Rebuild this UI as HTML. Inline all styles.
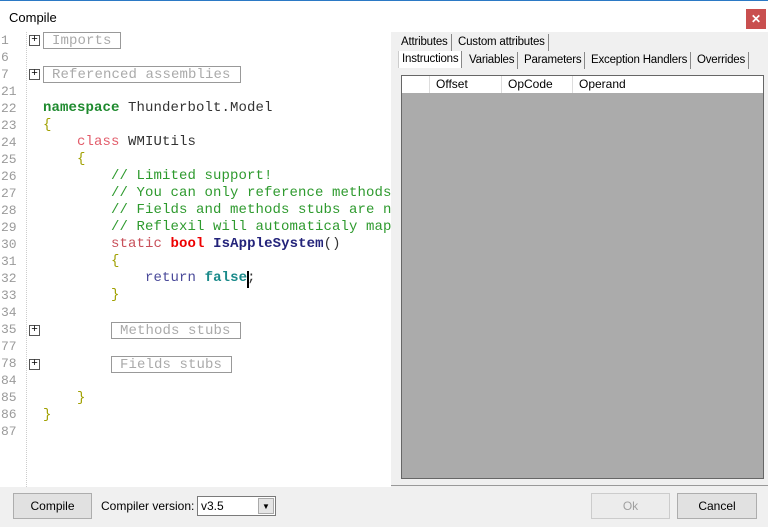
<!DOCTYPE html>
<html><head><meta charset="utf-8"><style>
*{margin:0;padding:0;box-sizing:border-box}
body{width:768px;height:527px;background:#f0f0f0;position:relative;overflow:hidden;font-family:"Liberation Sans",sans-serif;font-size:12px}
.top{position:absolute;left:0;top:0;width:768px;height:32px;background:#fff;border-top:1px solid #2b79c5}
.title{position:absolute;left:9px;top:9px;font-size:13px;color:#000}
.close{position:absolute;left:746px;top:8px;width:20px;height:20px;background:#c94f4f;color:#fff;font-size:12px;text-align:center;line-height:20px;font-weight:bold}
.editor{position:absolute;left:0;top:32px;width:391px;height:455px;background:#fff;overflow:hidden}
.gut{position:absolute;left:26px;top:0;height:455px;border-left:1px dotted #ccc}
.ln{position:absolute;left:1px;font-family:"Liberation Mono",monospace;font-size:13px;color:#9a9a9a;line-height:17px}
.code{position:absolute;white-space:pre;font-family:"Liberation Mono",monospace;font-size:14px;line-height:17px;color:#333;letter-spacing:0.1px}
.plus{position:absolute;left:29px;width:11px;height:11px;border:1px solid #555;font-size:11px;line-height:8px;text-align:center;font-family:"Liberation Mono",monospace;color:#000}
.fold{position:absolute;height:17px;border:1px solid #999;font-family:"Liberation Mono",monospace;font-size:14px;color:#aaa;line-height:17px;padding-left:8px;white-space:pre;letter-spacing:0.1px}
.g{color:#2e9a2e}.kw{color:#1e8a2e;font-weight:bold}.cl{color:#e25c6a}.st{color:#c8505a}.bo{color:#e00;font-weight:bold}.mt{color:#23237a;font-weight:bold}.rt{color:#4a4a9a}.fa{color:#1a8a8a;font-weight:bold}.br{color:#a0a000}
.tab{position:absolute;font-size:11.5px;letter-spacing:-0.2px;color:#000;border-right:1px solid #888;padding:0 3px;height:17px;line-height:17px}
.grid{position:absolute;left:401px;top:75px;width:363px;height:404px;background:#ababab;border:1px solid #666}
.hdr{position:absolute;left:0;top:0;width:361px;height:17px;background:#fff}
.hc{position:absolute;top:0;height:17px;line-height:17px;border-left:1px solid #ddd;padding-left:6px;font-size:12px}
.btn{position:absolute;top:493px;height:26px;background:#e1e1e1;border:1px solid #adadad;text-align:center;line-height:24px;font-size:12px}
</style></head><body>
<div class="top"><div class="title">Compile</div><div class="close">✕</div></div>
<div class="editor">
<div class="gut"></div>
<div class="ln" style="top:0">1<br>6<br>7<br>21<br>22<br>23<br>24<br>25<br>26<br>27<br>28<br>29<br>30<br>31<br>32<br>33<br>34<br>35<br>77<br>78<br>84<br>85<br>86<br>87</div>
<div class="plus" style="top:3px">+</div>
<div class="fold" style="left:43px;top:0;width:78px">Imports</div>
<div class="plus" style="top:37px">+</div>
<div class="fold" style="left:43px;top:34px;width:198px">Referenced assemblies</div>
<div class="code" style="left:43px;top:68px"><span class="kw">namespace</span> Thunderbolt.Model
<span class="br">{</span>
    <span class="cl">class</span> WMIUtils
    <span class="br">{</span>
        <span class="g">// Limited support!</span>
        <span class="g">// You can only reference methods or fields defined</span>
        <span class="g">// Fields and methods stubs are needed for compilation</span>
        <span class="g">// Reflexil will automaticaly map current type</span>
        <span class="st">static</span> <span class="bo">bool</span> <span class="mt">IsAppleSystem</span>()
        <span class="br">{</span>
            <span class="rt">return</span> <span class="fa">false</span>;
        <span class="br">}</span>
</div>
<div style="position:absolute;left:247px;top:239px;width:2px;height:17px;background:#000"></div>
<div class="plus" style="top:293px">+</div>
<div class="fold" style="left:111px;top:290px;width:130px">Methods stubs</div>
<div class="plus" style="top:327px">+</div>
<div class="fold" style="left:111px;top:324px;width:121px">Fields stubs</div>
<div class="code" style="left:43px;top:358px">    <span class="br">}</span>
<span class="br">}</span></div>
</div>
<div style="position:absolute;left:391px;top:32px;width:377px;height:454px;border-bottom:1px solid #999"></div>
<div class="tab" style="left:398px;top:34px">Attributes</div>
<div class="tab" style="left:455px;top:34px">Custom attributes</div>
<div class="tab" style="left:398px;top:51px;background:#fff;border-left:1px solid #ccc">Instructions</div>
<div class="tab" style="left:466px;top:52px">Variables</div>
<div class="tab" style="left:521px;top:52px">Parameters</div>
<div class="tab" style="left:588px;top:52px">Exception Handlers</div>
<div class="tab" style="left:694px;top:52px">Overrides</div>
<div class="grid"><div class="hdr">
<div class="hc" style="left:27px">Offset</div>
<div class="hc" style="left:99px">OpCode</div>
<div class="hc" style="left:170px">Operand</div>
</div></div>
<div class="btn" style="left:13px;width:79px">Compile</div>
<div style="position:absolute;left:101px;top:499px;font-size:12px">Compiler version:</div>
<div style="position:absolute;left:197px;top:496px;width:79px;height:20px;background:#fff;border:1px solid #7a7a7a;font-size:12px;line-height:18px;padding-left:3px">v3.5<div style="position:absolute;right:1px;top:1px;width:16px;height:16px;background:#e5e5e5;border:1px solid #aaa;font-size:8px;text-align:center;line-height:15px">▼</div></div>
<div class="btn" style="left:591px;width:79px;color:#a0a0a0;background:#ececec;border-color:#ccc">Ok</div>
<div class="btn" style="left:677px;width:80px">Cancel</div>
</body></html>
